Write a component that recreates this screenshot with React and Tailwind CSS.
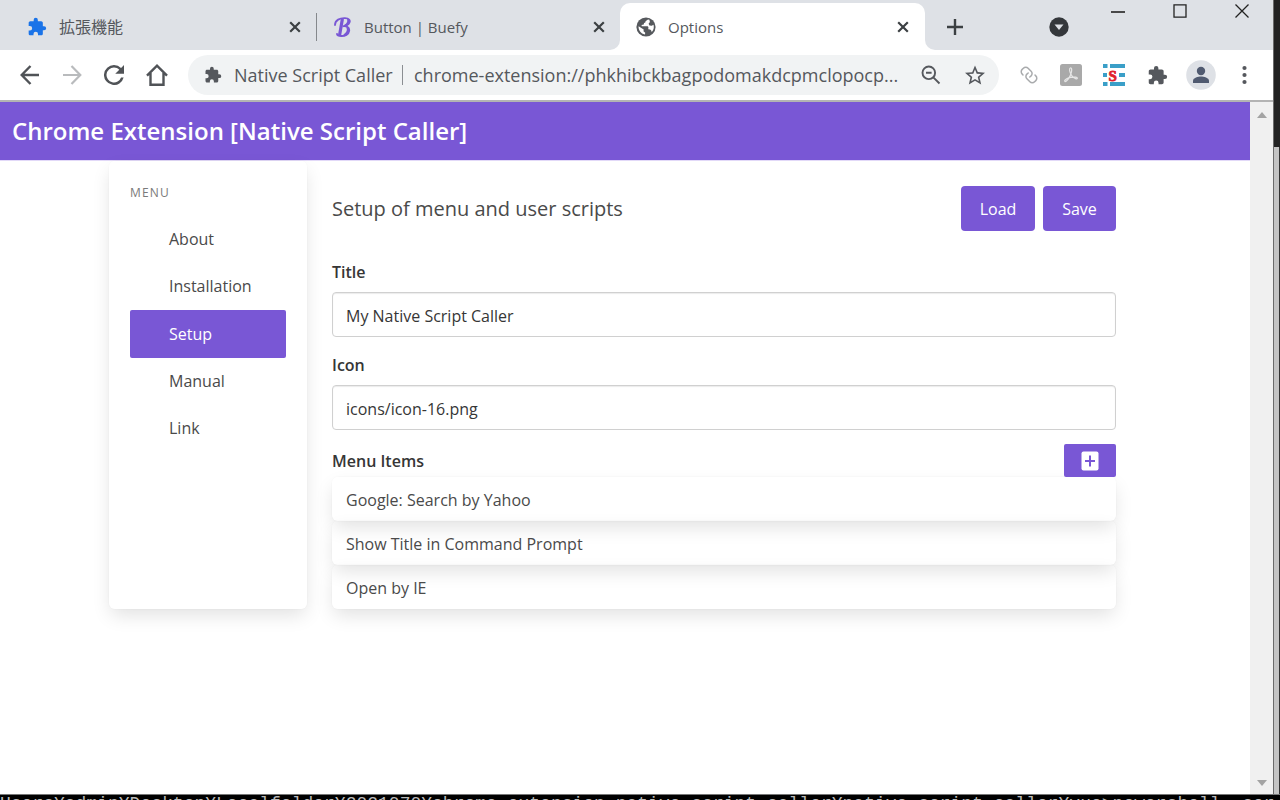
import React from "react";

const PUZZLE =
  "M20.5 11H19V7c0-1.1-.9-2-2-2h-4V3.5a2.5 2.5 0 0 0-5 0V5H4c-1.1 0-2 .9-2 2v3.8h1.5a2.7 2.7 0 0 1 0 5.4H2V20c0 1.1.9 2 2 2h3.8v-1.5a2.7 2.7 0 0 1 5.4 0V22H17c1.1 0 2-.9 2-2v-4h1.5a2.5 2.5 0 0 0 0-5z";

function Puzzle({ className }) {
  return (
    <svg viewBox="0 0 24 24" className={className} fill="currentColor" aria-hidden="true">
      <path d={PUZZLE} />
    </svg>
  );
}

function CloseGlyph() {
  return (
    <svg viewBox="0 0 12 12" className="size-3" fill="none" stroke="currentColor" strokeWidth="2.2" aria-hidden="true">
      <path d="M1.2 1.2 10.8 10.8M10.8 1.2 1.2 10.8" />
    </svg>
  );
}

function Globe() {
  return (
    <svg viewBox="0 0 20 20" className="size-5" aria-hidden="true">
      <circle cx="10" cy="10" r="9.600" fill="#56595d" />
      <path
        fill="#fff"
        d="M12 2.400 9.500 4.200c.2 1-.4 1.700-1.500 1.800L7.800 7.500 5.500 8l.3 1.300h5.400c.8 0 1.300.6 1.200 1.400l-.2 1.600 1.700.3c.8.100 1.200.7 1.500 1.500l.3.900c1.300-1.300 2.100-3.100 2.100-5 0-.8-.1-1.500-.4-2.200l-1.600 1-2.300-.4-.9-1.700 1.300-1.700-.5-2.200zM2.600 9.200c-.4 3.700 2.200 7.400 6.400 8.300l.2-1.800-1.700-1.400.2-1.700z"
      />
    </svg>
  );
}

function BuefyLogo() {
  return (
    <svg viewBox="0 0 18 20" className="h-5 w-[18px]" fill="none" stroke="#7957d5" strokeLinecap="round" aria-hidden="true">
      <path strokeWidth="1.8" d="M1 8C1 3 6 1 11 1.2c4 .2 5.500 2 4.500 4.300C14.800 7.500 12 9 8.500 9.300c4-.5 7.200 1 6.700 4.500-.5 3.700-4.200 5.400-8 5.200-2.400-.1-4-.9-4.200-2" />
      <path strokeWidth="3.200" d="M8.300 2.500 5.700 17.500" />
      <path strokeWidth="2.200" d="M14.200 2.800c.8 2-1 4.700-3 5.700M13.500 10.700c1.300 2.300-.3 6-3 7.200" />
    </svg>
  );
}

function TabStrip() {
  return (
    <header className="flex h-[50px] shrink-0 items-start bg-[#dee1e6] text-[15px] text-[#55585d]">
      <div className="flex h-[50px] w-[317px] shrink-0 items-center pt-1 pl-[27px]">
        <a href="#extensions" className="flex grow items-center gap-3">
          <Puzzle className="size-5 text-[#1a73e8]" />
          <span className="text-[16px] leading-6">拡張機能</span>
        </a>
        <button type="button" aria-label="Close 拡張機能" className="text-[#3c4043]">
          <CloseGlyph />
        </button>
        <span className="ml-[15px] h-7 w-px bg-[#85888c]" />
      </div>
      <div className="h-[50px] w-[303px] shrink-0 bg-white">
        <div className="flex h-full items-center rounded-br-[10px] bg-[#dee1e6] pt-1 pr-[15px] pl-[17px]">
          <a href="#buefy" className="flex grow items-center gap-3">
            <BuefyLogo />
            <span className="leading-6">Button | Buefy</span>
          </a>
          <button type="button" aria-label="Close Button | Buefy" className="text-[#3c4043]">
            <CloseGlyph />
          </button>
        </div>
      </div>
      <div className="mt-[3px] flex h-[47px] w-[305px] shrink-0 items-center rounded-t-[10px] bg-white pt-0.5 pr-4 pb-px pl-4">
        <a href="#options" className="flex grow items-center gap-3">
          <Globe />
          <span className="leading-6">Options</span>
        </a>
        <button type="button" aria-label="Close Options" className="text-[#3c4043]">
          <CloseGlyph />
        </button>
      </div>
      <div className="h-[50px] grow bg-white">
        <div className="flex h-full rounded-bl-[10px] bg-[#dee1e6] pl-[22px]">
          <button type="button" aria-label="New tab" className="mt-1 text-[#3c4043]">
            <svg viewBox="0 0 16 16" className="size-4" fill="none" stroke="currentColor" strokeWidth="2.4">
              <path d="M8 0v16M0 8h16" />
            </svg>
          </button>
          <button type="button" aria-label="Search tabs" className="mt-1 ml-auto">
            <svg viewBox="0 0 20 20" className="size-5">
              <circle cx="10" cy="10" r="9.700" fill="#34373b" />
              <path d="M5.500 7.500h9L10 13z" fill="#dee1e6" />
            </svg>
          </button>
          <div className="flex h-[22px] items-center gap-12 pr-6 pl-[42px] text-[#222]">
            <button type="button" aria-label="Minimize">
              <svg viewBox="0 0 14 14" className="size-[14px]" stroke="currentColor" strokeWidth="1.600">
                <path d="M0 8h14" />
              </svg>
            </button>
            <button type="button" aria-label="Maximize">
              <svg viewBox="0 0 14 14" className="size-[14px]" fill="none" stroke="currentColor" strokeWidth="1.300">
                <path d="M1 .8h12v12.400H1z" />
              </svg>
            </button>
            <button type="button" aria-label="Close window">
              <svg viewBox="0 0 14 14" className="size-[14px]" fill="none" stroke="currentColor" strokeWidth="1.300">
                <path d="M.5.5l13 13M13.500.5l-13 13" />
              </svg>
            </button>
          </div>
        </div>
      </div>
    </header>
  );
}

function Toolbar() {
  return (
    <div className="flex h-[50px] shrink-0 items-center bg-white pr-[26px] pl-5 text-[#55585d]">
      <div className="flex shrink-0 items-center gap-[22px]">
        <button type="button" aria-label="Back">
          <svg viewBox="0 0 20 20" className="size-5" fill="none" stroke="#505357" strokeWidth="2.400">
            <path d="M19 10H2M10.500 1 1.700 10l8.800 9" />
          </svg>
        </button>
        <button type="button" aria-label="Forward">
          <svg viewBox="0 0 20 20" className="size-5" fill="none" stroke="#b9bbbd" strokeWidth="2.200">
            <path d="M1 10h17M9.500 1l8.800 9-8.800 9" />
          </svg>
        </button>
        <button type="button" aria-label="Reload">
          <svg viewBox="4 4 16 16" className="size-5" fill="#505357">
            <path d="M17.650 6.350A7.960 7.960 0 0 0 12 4a8 8 0 1 0 7.730 10h-2.080A6 6 0 1 1 12 6c1.660 0 3.140.69 4.220 1.780L13 11h7V4z" />
          </svg>
        </button>
        <button type="button" aria-label="Home">
          <svg viewBox="0 0 22 22" className="size-[22px]" fill="none" stroke="#505357" strokeWidth="2.400">
            <path d="M1 11.700 11 1.700l10 10M4.500 9v11.800h13V9" />
          </svg>
        </button>
      </div>
      <div className="ml-5 flex h-10 min-w-0 grow items-center rounded-full bg-[#f1f3f4] pr-[14px] pl-4 text-[18px]">
        <Puzzle className="size-[18px] shrink-0" />
        <span className="ml-3 w-[157px] shrink-0 leading-6 whitespace-nowrap">Native Script Caller</span>
        <span className="mx-[11px] h-5 w-px shrink-0 bg-[#8b8e92]" />
        <span className="min-w-0 grow overflow-hidden leading-6 whitespace-nowrap">
          chrome-extension://phkhibckbagpodomakdcpmclopocp...
        </span>
        <button type="button" aria-label="Zoom" className="ml-4 shrink-0">
          <svg viewBox="0 0 20 20" className="size-5" fill="none" stroke="currentColor" strokeWidth="1.900">
            <circle cx="7.800" cy="7.800" r="6.300" />
            <path d="M12.300 12.300 18.500 18.500M5 7.800h5.600" />
          </svg>
        </button>
        <button type="button" aria-label="Bookmark this page" className="ml-6 shrink-0">
          <svg viewBox="2 2 20 19" className="size-5" fill="currentColor">
            <path d="m22 9.240-7.190-.62L12 2 9.190 8.630 2 9.240l5.460 4.730L5.820 21 12 17.270 18.180 21l-1.630-7.030L22 9.240zM12 15.400l-3.760 2.270 1-4.280-3.320-2.880 4.380-.38L12 6.100l1.710 4.040 4.380.38-3.320 2.880 1 4.280L12 15.400z" />
          </svg>
        </button>
      </div>
      <div className="ml-[21px] flex shrink-0 items-center">
        <button type="button" aria-label="Copy link">
          <svg viewBox="0 0 18 18" className="size-[18px]" fill="none" stroke="#a9abad" strokeWidth="1.500" strokeLinecap="round">
            <path d="M3 9 2.200 8.100A3.300 3.300 0 0 1 2.200 3.400L3.400 2.200a3.300 3.300 0 0 1 4.700 0l3 3a3.300 3.300 0 0 1 0 4.700L9.800 11" />
            <path d="M15 9l.8.9a3.300 3.300 0 0 1 0 4.700l-1.200 1.200a3.300 3.300 0 0 1-4.700 0l-3-3a3.300 3.300 0 0 1 0-4.700L8.200 7" />
          </svg>
        </button>
        <button type="button" aria-label="PDF" className="ml-[22px]">
          <svg viewBox="0 0 22 22" className="size-[22px]">
            <rect width="22" height="22" rx="2.500" fill="#a9a9a9" />
            <path
              d="M10.300 4c1.500-.4 1.700 2 1 4.500-.8 3-3 7-5.200 8.800-1 .8-2-.3-1-1.300 1.800-1.800 6.500-3.200 10.500-2.800 2.500.3 2 2 .5 1.600-3-.8-6-4.500-6.500-8.300-.1-1 .1-2.300.7-2.500z"
              fill="none"
              stroke="#e6e6e6"
              strokeWidth="1.200"
            />
          </svg>
        </button>
        <button type="button" aria-label="Native Script Caller" className="ml-[21px]">
          <svg viewBox="0 0 22 22" className="size-[22px]">
            <path
              fill="#3a9fc8"
              d="M0 0h4.500v4H0zM7 0h15v4H7zM0 9h4v4H0zM16 9h6v4h-6zM0 18h4.500v4H0zM7 18h15v4H7z"
            />
            <text x="5.500" y="16.500" fontSize="15" fontWeight="bold" fill="#e01f2d" stroke="#e01f2d" strokeWidth=".8" fontFamily="Liberation Serif, serif">
              S
            </text>
          </svg>
        </button>
        <button type="button" aria-label="Extensions" className="ml-[22px]">
          <Puzzle className="size-[21px]" />
        </button>
        <button type="button" aria-label="Profile" className="ml-[18px]">
          <svg viewBox="0 0 30 30" className="size-[30px]">
            <circle cx="15" cy="15" r="14.800" fill="#dee1e6" />
            <circle cx="15" cy="11" r="4.200" fill="#505a70" />
            <path d="M7 23v-2.300c0-2.800 5.200-4.200 8-4.200s8 1.400 8 4.200V23z" fill="#505a70" />
          </svg>
        </button>
        <button type="button" aria-label="More" className="ml-[26px]">
          <svg viewBox="0 0 5 20" className="h-5 w-[5px]" fill="currentColor">
            <circle cx="2.500" cy="3" r="2.100" />
            <circle cx="2.500" cy="10" r="2.100" />
            <circle cx="2.500" cy="17" r="2.100" />
          </svg>
        </button>
      </div>
    </div>
  );
}

const MENU = ["About", "Installation", "Setup", "Manual", "Link"];
const ITEMS = ["Google: Search by Yahoo", "Show Title in Command Prompt", "Open by IE"];

const CARD = "shadow-[0_8px_19px_-2px_rgba(10,10,10,0.12),0_0_0_1px_rgba(10,10,10,0.01)]";

function Sidebar() {
  return (
    <nav className={"w-[198px] shrink-0 rounded-md px-[21px] pt-[22px] " + CARD}>
      <p className="mb-[13px] text-[12px] leading-5 tracking-widest text-[#7a7a7a]">MENU</p>
      <ul>
        {MENU.map((name) => (
          <li key={name}>
            <a
              href={"#" + name.toLowerCase()}
              className={
                name === "Setup"
                  ? "block rounded-xs bg-[#7957d5] py-3 pl-[39px] leading-6 text-white"
                  : "block rounded-xs py-3 pl-[39px] leading-[23px] text-[#4a4a4a]"
              }
            >
              {name}
            </a>
          </li>
        ))}
      </ul>
    </nav>
  );
}

function Field({ id, label, value }) {
  return (
    <div>
      <label htmlFor={id} className="block leading-6 font-semibold text-[#363636]">
        {label}
      </label>
      <input
        id={id}
        type="text"
        defaultValue={value}
        className="mt-2 block h-[45px] w-full rounded-[4px] border border-[#d0d0d0] px-[13px] pt-0.5 text-[#363636] shadow-[inset_0_1px_1px_rgba(10,10,10,0.08)]"
      />
    </div>
  );
}

function Options() {
  return (
    <main className="flex min-w-0 grow flex-col bg-white">
      <h1 className="h-[59px] shrink-0 border-b border-[#e2d9f8] bg-[#7957d5] pl-3 text-[24px] leading-[58px] font-semibold text-white">
        Chrome Extension [Native Script Caller]
      </h1>
      <div className="mr-[134px] ml-[109px] flex gap-[25px]">
        <Sidebar />
        <section className="min-w-0 grow pt-[25px]">
          <div className="flex items-center justify-between">
            <h2 className="text-[20px] leading-7 text-[#4a4a4a]">Setup of menu and user scripts</h2>
            <div className="flex gap-2">
              <button type="button" className="h-[45px] w-[74px] rounded-[4px] bg-[#7957d5] text-white">
                Load
              </button>
              <button type="button" className="h-[45px] w-[73px] rounded-[4px] bg-[#7957d5] text-white">
                Save
              </button>
            </div>
          </div>
          <div className="mt-[29px] flex flex-col gap-4">
            <Field id="title" label="Title" value="My Native Script Caller" />
            <Field id="icon" label="Icon" value="icons/icon-16.png" />
          </div>
          <div className="mt-[14px] flex items-center justify-between">
            <h3 className="leading-6 font-semibold text-[#363636]">Menu Items</h3>
            <button
              type="button"
              aria-label="Add menu item"
              className="flex h-[33px] w-[52px] items-center justify-center rounded-xs bg-[#7957d5]"
            >
              <svg viewBox="0 0 18 20" className="h-5 w-[18px]">
                <rect x=".5" y=".5" width="17" height="19" rx="2" fill="#fff" />
                <path d="M9 4.500v11M4 10h10" stroke="#7957d5" strokeWidth="2" />
              </svg>
            </button>
          </div>
          <ul>
            {ITEMS.map((name) => (
              <li key={name} className={"h-11 rounded-md pl-[14px] leading-[46px] text-[#4a4a4a] " + CARD}>
                {name}
              </li>
            ))}
          </ul>
        </section>
      </div>
    </main>
  );
}

function ScrollBar() {
  return (
    <div className="flex w-[23px] shrink-0 flex-col items-center justify-between bg-[#f0f0f0] pt-2.5 pb-2">
      <svg viewBox="0 0 10 6" className="h-1.5 w-2.5" fill="#a3a3a3" aria-hidden="true">
        <path d="M0 6h10L5 0z" />
      </svg>
      <svg viewBox="0 0 10 6" className="h-1.5 w-2.5" fill="#a3a3a3" aria-hidden="true">
        <path d="M0 0h10L5 6z" />
      </svg>
    </div>
  );
}

export default function App() {
  return (
    <div className="flex h-screen flex-col overflow-hidden bg-black font-['Open_Sans','Noto_Sans_CJK_JP',sans-serif] text-[16px] leading-6">
      <div className="flex min-h-0 grow">
        <div className="flex min-w-0 grow flex-col">
          <TabStrip />
          <Toolbar />
          <div className="flex min-h-0 grow border-t-2 border-[#b3b3b3]">
            <Options />
            <ScrollBar />
          </div>
        </div>
        <div className="flex w-[7px] shrink-0 flex-col border-l border-[#6b6b6b]">
          <div className="h-[147px] shrink-0 bg-[#222]" />
          <div className="grow border-r border-[#333] bg-[#c4c4c4]" />
        </div>
      </div>
      <div className="h-1.5 shrink-0 overflow-hidden border-t border-[#777] font-['Liberation_Mono',monospace] text-[18px] leading-[18px] whitespace-pre text-[#bbb]">
        Users¥admin¥Desktop¥Localfolder¥2021070¥chrome-extension-native-script-caller¥native-script-caller¥vue&gt;powershell .ser
      </div>
    </div>
  );
}
